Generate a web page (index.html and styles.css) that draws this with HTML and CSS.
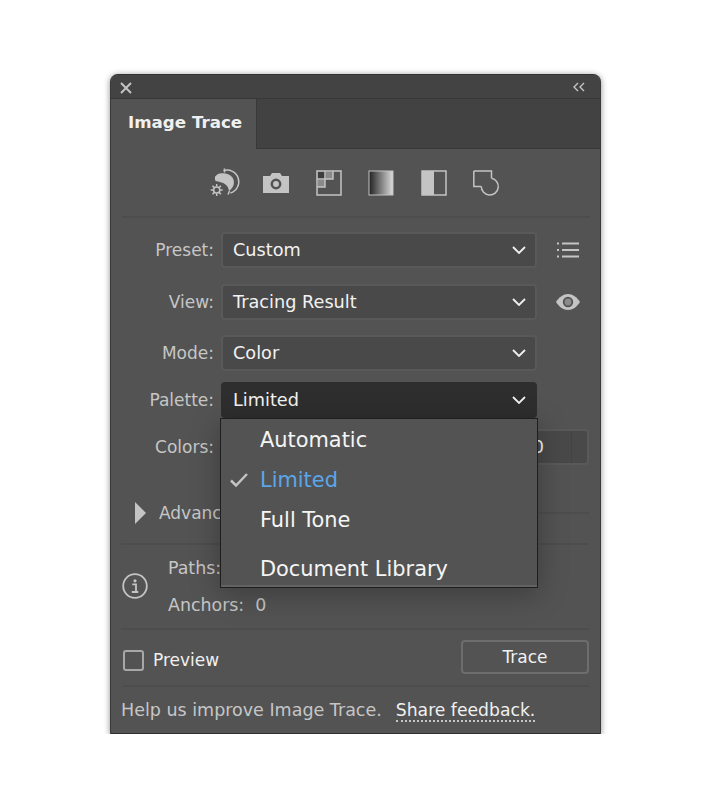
FILE: index.html
```html
<!DOCTYPE html>
<html lang="en">
<head>
<meta charset="utf-8">
<title>Image Trace</title>
<link rel="stylesheet" href="styles.css">
</head>
<body>
<main class="panel">
  <header class="titlebar">
    <svg class="close" viewBox="0 0 14 14"><path d="M2 2l10 10M12 2L2 12"/></svg>
    <svg class="collapse" viewBox="0 0 14 10"><path d="M6 1L2 5l4 4M12 1L8 5l4 4"/></svg>
  </header>
  <nav class="tabbar"><div class="tab">Image Trace</div></nav>

  <section class="icons">
    <svg class="ico" viewBox="0 0 30 30"><path class="ln" d="M13.500 2.500A11.500 11.500 0 0 1 20.500 25"/><path class="ln" d="M14.500 .5v4M19.500 23l-1.500 3.500"/><path class="fl" d="M5 8.700C7 6 9.500 5 12 5.200c4-.2 8 1 10.500 4.300 2 3 2 7.500-.5 10.500-.8 1.100-2 2.300-3 3-.4-3-1.500-5-3.500-6.500-2.800-2.300-6.500-2.800-10-3.500-.5-1.400-.8-3-.5-4.300z"/><circle class="ln" cx="6.700" cy="22" r="3.100"/><path class="ln" d="M6.700 16v2.500M6.700 25.500V28M.7 22h2.500M10.200 22h2.500M2.500 17.800l1.800 1.800M9.100 24.400l1.800 1.800M2.500 26.200l1.800-1.800M9.100 19.600l1.800-1.800"/></svg>
    <svg class="ico" viewBox="0 0 26 26"><path class="fl" d="M0 6h7l2-3h8l2 3h7v17H0z"/><circle class="hole" cx="13" cy="14" r="4.200"/></svg>
    <svg class="ico" viewBox="0 0 26 26"><path class="darkest" d="M2 2h7v7H2z"/><path class="mid" d="M10 2h7v7h-7z"/><path class="mid" d="M2 10h7v7H2z"/><path class="ln" d="M1 1h24v24H1z"/><path class="ln" d="M17 1v8H9v8H1M9 1v8H1"/></svg>
    <svg class="ico" viewBox="0 0 26 26"><defs><linearGradient id="grad"><stop offset="0" stop-color="#222"/><stop offset="1" stop-color="#dcdcdc"/></linearGradient></defs><rect x="1" y="1" width="24" height="24" fill="url(#grad)" stroke="#c4c4c4"/></svg>
    <svg class="ico" viewBox="0 0 26 26"><path class="fl" d="M1 1h12v24H1z"/><path class="ln" d="M1 1h24v24H1z"/></svg>
    <svg class="ico" viewBox="0 0 26 26"><path class="ln" d="M.8 1h17.700v7.200M.8 1v15.500h7.500"/><path class="ln" d="M18.500 8.200A8.500 8.500 0 1 1 8.300 16.500"/></svg>
  </section>

  <section class="form">
    <div class="row">
      <span class="lbl">Preset:</span>
      <div class="select"><span>Custom</span><svg class="chev" viewBox="0 0 14 8"><path d="M1 1l6 6 6-6"/></svg></div>
      <svg class="side" viewBox="0 0 24 16"><path d="M1 1.500h2M6 1.500h17M1 8h2M6 8h17M1 14.500h2M6 14.500h17"/></svg>
    </div>
    <div class="row row-view">
      <span class="lbl">View:</span>
      <div class="select"><span>Tracing Result</span><svg class="chev" viewBox="0 0 14 8"><path d="M1 1l6 6 6-6"/></svg></div>
      <svg class="side eye" viewBox="0 0 24 16"><path d="M0 8c3-5 7.500-8 12-8s9 3 12 8c-3 5-7.500 8-12 8S3 13 0 8z"/><circle class="eye-ring" cx="12" cy="8" r="4.300"/></svg>
    </div>
    <div class="row row-mode">
      <span class="lbl">Mode:</span>
      <div class="select"><span>Color</span><svg class="chev" viewBox="0 0 14 8"><path d="M1 1l6 6 6-6"/></svg></div>
    </div>
    <div class="row row-palette">
      <span class="lbl">Palette:</span>
      <div class="select open"><span>Limited</span><svg class="chev" viewBox="0 0 14 8"><path d="M1 1l6 6 6-6"/></svg></div>
    </div>
    <div class="row row-colors">
      <span class="lbl">Colors:</span>
      <div class="stepper"><span class="val">30</span><span class="step"></span></div>
    </div>
  </section>

  <section class="advanced">
    <i class="tri"></i><span class="adv-text">Advanced</span><i class="adv-line"></i>
  </section>

  <section class="stats">
    <svg class="info" viewBox="0 0 26 26"><circle cx="13" cy="13" r="11.800"/><circle class="dot" cx="13" cy="7.800" r="1.600"/><path class="i" d="M10.300 11.300h3.700v7.600h2.200M9.800 19h6.500"/></svg>
    <div class="stat-text">
      <div>Paths:</div>
      <div>Anchors:&nbsp; 0</div>
    </div>
  </section>

  <section class="actions">
    <label class="preview"><i class="check"></i>Preview</label>
    <button class="trace" type="button">Trace</button>
  </section>

  <footer class="foot">Help us improve Image Trace.<a class="share">Share feedback.</a></footer>

  <ul class="menu">
    <li>Automatic</li>
    <li class="sel"><svg class="tick" viewBox="0 0 20 16"><path d="M2 8.500l5 5L18 2"/></svg>Limited</li>
    <li>Full Tone</li>
    <li class="sep"></li>
    <li>Document Library</li>
  </ul>
</main>
</body>
</html>
```
FILE: styles.css
```css
* { box-sizing: border-box; }
html, body { margin: 0; background: #fff; }
body { padding: 74px 111px 0 110px; font-family: "DejaVu Sans", sans-serif; }

.panel {
  position: relative;
  width: 491px;
  height: 660px;
  background: #535353;
  border: 1px solid #3a3a3a;
  border-top-color: #333;
  border-bottom-color: #2f2f2f;
  border-radius: 8px 8px 1px 1px;
  box-shadow: 0 1px 6px rgba(0,0,0,.45);
  color: #c6c6c6;
}

.titlebar {
  height: 24px;
  background: #434343;
  border-bottom: 1px solid #383838;
  border-radius: 7px 7px 0 0;
  display: flex;
  align-items: center;
  justify-content: space-between;
  padding: 3px 14px 0 8px;
}
.close { width: 14px; height: 14px; fill: none; stroke: #c4c4c4; stroke-width: 2; }
.collapse { width: 14px; height: 10px; margin-top: -2px; fill: none; stroke: #c4c4c4; stroke-width: 1.400; }

.tabbar {
  height: 50px;
  background: #424242;
  border-bottom: 1px solid #383838;
  display: flex;
}
.tab {
  width: 146px;
  height: 50px;
  background: #535353;
  border-right: 1px solid #383838;
  padding: 13px 0 0 17px;
  color: #f0f0f0;
  font-weight: 700;
  font-size: 16.700px;
  line-height: 20px;
}

.icons {
  height: 69px;
  margin: 0 10.500px;
  border-bottom: 2px solid #4d4d4d;
  display: flex;
  justify-content: center;
  align-items: center;
  gap: 26.500px;
}
.ico { width: 26px; height: 26px; flex: none; overflow: visible; }
.ico:first-child { width: 30px; height: 30px; margin: 0 -3px 0 -2px; }
.ln { fill: none; stroke: #c4c4c4; stroke-width: 1.500; }
.fl { fill: #c4c4c4; }
.mid { fill: #8a8a8a; }
.darkest { fill: #3d3d3d; }
.hole { fill: #c4c4c4; stroke: #535353; stroke-width: 2.500; }

.form { padding-top: 14px; }
.row { display: flex; align-items: center; height: 36px; }
.row-view { margin-top: 16px; }
.row-mode { margin-top: 15px; }
.row-palette { margin-top: 11px; }
.row-colors { margin-top: 11px; }
.lbl {
  width: 103px;
  text-align: right;
  font-size: 17px;
  margin-right: 7px;
  color: #c6c6c6;
}
.select {
  width: 316px;
  height: 36px;
  background: #494949;
  border: 2px solid #595959;
  border-radius: 4px;
  display: flex;
  align-items: center;
  justify-content: space-between;
  padding: 0 9px 0 10px;
  font-size: 17.700px;
  color: #f2f2f2;
}
.select.open { background: #2e2e2e; border-color: #2e2e2e; }
.chev { width: 14px; height: 8px; fill: none; stroke: #f0f0f0; stroke-width: 1.800; }
.side { width: 24px; height: 16px; margin-left: 19px; fill: none; stroke: #c4c4c4; stroke-width: 1.800; }
.eye { fill: #c4c4c4; stroke: none; }
.eye-ring { fill: #8a8a8a; stroke: #535353; stroke-width: 1.800; }

.stepper {
  width: 368px;
  height: 36px;
  background: #494949;
  border: 2px solid #595959;
  border-radius: 4px;
  display: flex;
  align-items: center;
  justify-content: flex-end;
  font-size: 17.700px;
  color: #f2f2f2;
}
.val { margin-right: 27px; }
.step { width: 16px; height: 32px; border-left: 1px solid #424242; }

.advanced {
  display: flex;
  align-items: center;
  height: 24px;
  margin-top: 36px;
  padding: 0 11px 0 24px;
}
.tri {
  width: 0; height: 0;
  border-left: 11px solid #c4c4c4;
  border-top: 11px solid transparent;
  border-bottom: 11px solid transparent;
  margin-right: 13px;
}
.adv-text { font-size: 17px; margin-right: 8px; }
.adv-line { flex: 1; height: 2px; background: #4d4d4d; }

.stats {
  margin: 18px 11px 0 10px;
  height: 87px;
  border-top: 2px solid #4d4d4d;
  border-bottom: 2px solid #4d4d4d;
  display: flex;
  align-items: center;
}
.info { width: 26px; height: 26px; margin: -2px 20px 0 1px; flex: none; fill: none; stroke: #c4c4c4; stroke-width: 1.800; }
.dot { fill: #c4c4c4; stroke: none; }
.i { stroke-width: 1.800; }
.stat-text { font-size: 17.400px; line-height: 37px; }

.actions {
  margin: 0 11px 0 12px;
  height: 57px;
  border-bottom: 2px solid #4d4d4d;
  display: flex;
  align-items: center;
  justify-content: space-between;
}
.preview { display: flex; align-items: center; font-size: 17px; color: #f0f0f0; margin-top: 5px; }
.check {
  width: 21px; height: 21px;
  border: 2px solid #a8a8a8;
  border-radius: 3px;
  margin-right: 9px;
}
.trace {
  width: 128px; height: 34px;
  margin-top: -1px;
  background: none;
  border: 2px solid #6d6d6d;
  border-radius: 4px;
  color: #f0f0f0;
  font: 17px "DejaVu Sans", sans-serif;
}

.foot {
  display: flex;
  font-size: 17.500px;
  line-height: 20px;
  padding: 13px 0 0 10px;
  color: #c6c6c6;
}
.share {
  margin-left: 14px;
  font-size: 17.200px;
  color: #f0f0f0;
  border-bottom: 2px dotted #c6c6c6;
}

.menu {
  position: absolute;
  left: 109px;
  top: 343px;
  width: 318px;
  height: 170px;
  margin: 0;
  padding: 2px 0 0;
  list-style: none;
  background: #535353;
  border: 1px solid #1f1f1f;
  box-shadow: inset 0 -2px 0 #636363, 0 6px 28px rgba(0,0,0,.28);
  color: #f5f5f5;
  font-size: 20.900px;
}
.menu li {
  position: relative;
  height: 40px;
  line-height: 38px;
  padding-left: 39px;
}
.menu .sel { color: #5ba6ea; }
.menu .sep { height: 9px; }
.tick {
  position: absolute;
  left: 8px; top: 11px;
  width: 20px; height: 16px;
  fill: none;
  stroke: #c4c4c4;
  stroke-width: 2.500;
}
```
